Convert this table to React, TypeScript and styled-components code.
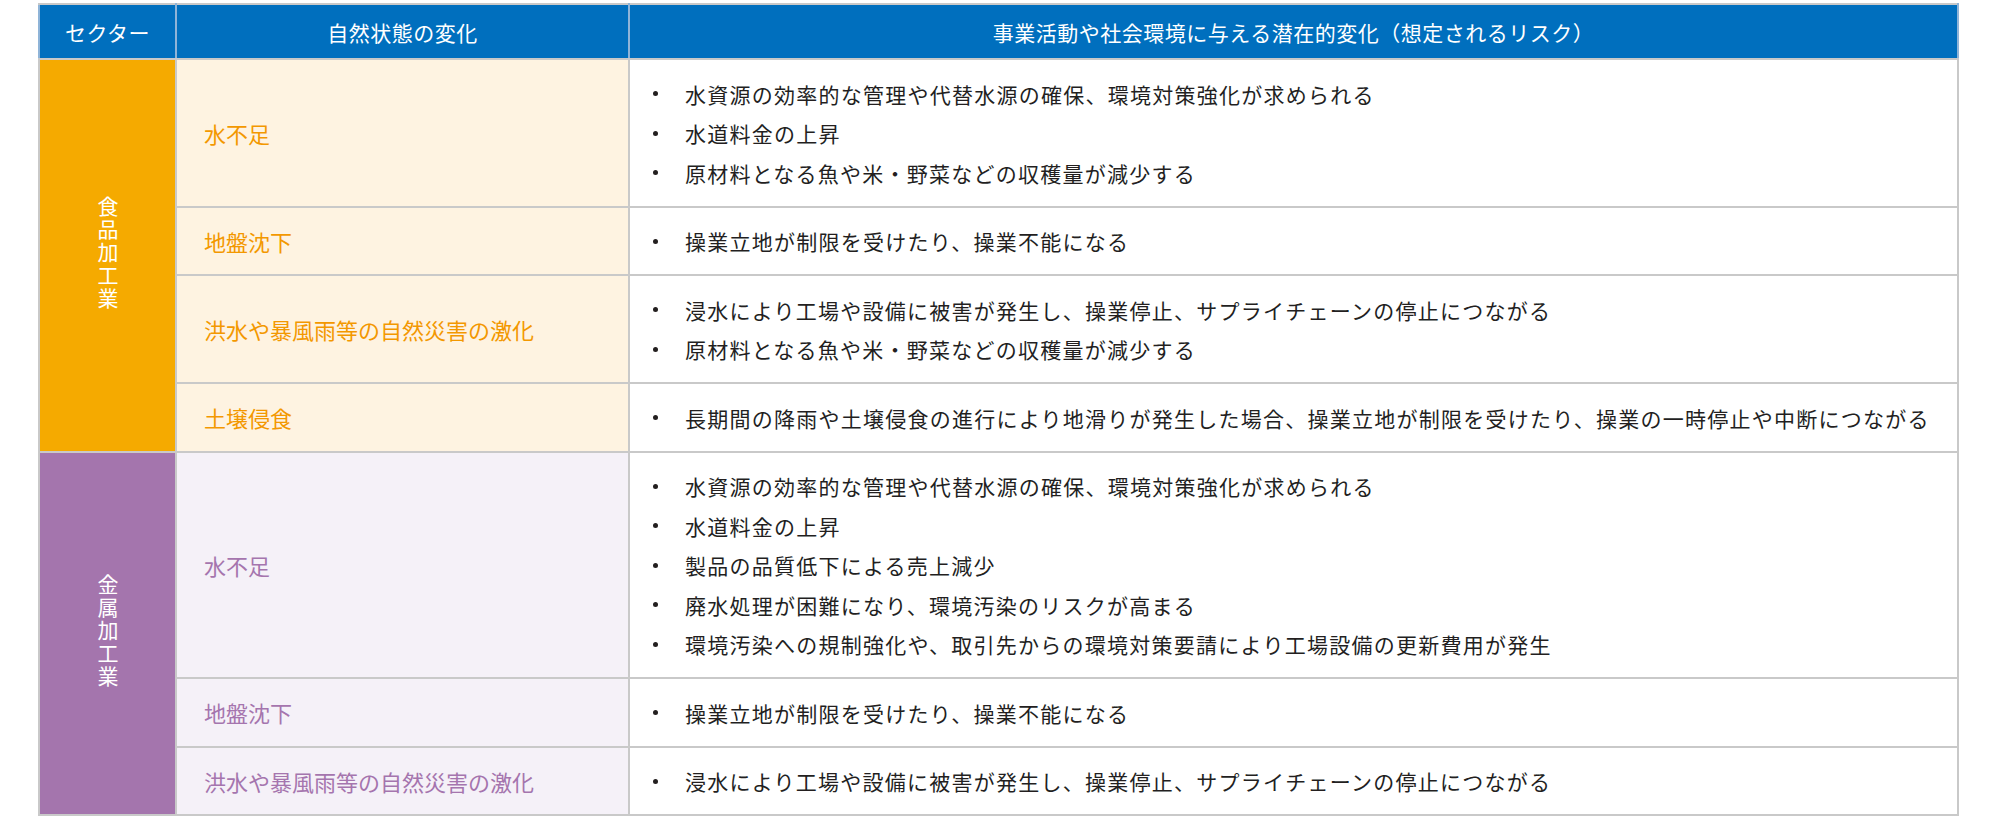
import React from "react";
import styled, { createGlobalStyle } from "styled-components";

const GlobalStyle = createGlobalStyle`
  html, body {
    margin: 0;
    padding: 0;
    background: #ffffff;
  }
  body {
    font-family: "Noto Sans CJK JP", "Noto Sans", sans-serif;
  }
`;

const Page = styled.div`
  padding: 3px 33px 0 38px;
`;

const Table = styled.table`
  width: 1921px;
  border-collapse: collapse;
  table-layout: fixed;
  border: 2px solid #c9c9c9;
`;

const HeadCell = styled.th<{ $w?: number }>`
  ${(p) => (p.$w ? `width: ${p.$w}px;` : "")}
  height: 53px;
  padding: 0;
  background: #006fbe;
  color: #ffffff;
  font-size: 21px;
  font-weight: 400;
  letter-spacing: 0.5px;
  text-align: center;
  vertical-align: middle;
  border: 2px solid #c9c9c9;
  border-left-color: #8fb4d8;
  border-right-color: #8fb4d8;
`;

const SectorCell = styled.td<{ $bg: string }>`
  padding: 0;
  background: ${(p) => p.$bg};
  border: 2px solid #c9c9c9;
  text-align: center;
  vertical-align: middle;
`;

const SectorName = styled.span`
  display: inline-block;
  writing-mode: vertical-rl;
  color: #ffffff;
  font-size: 21px;
  letter-spacing: 1.8px;
  line-height: 1;
`;

const NatureCell = styled.td<{ $bg: string; $fg: string }>`
  padding: 0 0 0 27px;
  background: ${(p) => p.$bg};
  color: ${(p) => p.$fg};
  font-size: 22px;
  border: 2px solid #c9c9c9;
  vertical-align: middle;
`;

const RiskCell = styled.td`
  padding: 14px 0 13px 23px;
  background: #ffffff;
  border: 2px solid #c9c9c9;
  vertical-align: middle;
`;

const RiskList = styled.ul`
  list-style: none;
  margin: 0;
  padding: 0;
`;

const RiskItem = styled.li`
  display: flex;
  align-items: center;
  height: 39.5px;
  color: #231f1f;
  font-size: 21px;
  letter-spacing: 1.25px;
  white-space: nowrap;
`;

const Bullet = styled.span`
  flex: 0 0 32px;
  display: flex;
  align-items: center;

  &::before {
    content: "";
    width: 5px;
    height: 5px;
    border-radius: 50%;
    background: #231f1f;
  }
`;

type Row = { nature: string; risks: string[] };
type Sector = { name: string; bg: string; soft: string; accent: string; rows: Row[] };

const sectors: Sector[] = [
  {
    name: "食品加工業",
    bg: "#f5aa00",
    soft: "#fef3e1",
    accent: "#f39800",
    rows: [
      {
        nature: "水不足",
        risks: [
          "水資源の効率的な管理や代替水源の確保、環境対策強化が求められる",
          "水道料金の上昇",
          "原材料となる魚や米・野菜などの収穫量が減少する",
        ],
      },
      { nature: "地盤沈下", risks: ["操業立地が制限を受けたり、操業不能になる"] },
      {
        nature: "洪水や暴風雨等の自然災害の激化",
        risks: [
          "浸水により工場や設備に被害が発生し、操業停止、サプライチェーンの停止につながる",
          "原材料となる魚や米・野菜などの収穫量が減少する",
        ],
      },
      {
        nature: "土壌侵食",
        risks: [
          "長期間の降雨や土壌侵食の進行により地滑りが発生した場合、操業立地が制限を受けたり、操業の一時停止や中断につながる",
        ],
      },
    ],
  },
  {
    name: "金属加工業",
    bg: "#a475ad",
    soft: "#f5f1f8",
    accent: "#a575ae",
    rows: [
      {
        nature: "水不足",
        risks: [
          "水資源の効率的な管理や代替水源の確保、環境対策強化が求められる",
          "水道料金の上昇",
          "製品の品質低下による売上減少",
          "廃水処理が困難になり、環境汚染のリスクが高まる",
          "環境汚染への規制強化や、取引先からの環境対策要請により工場設備の更新費用が発生",
        ],
      },
      { nature: "地盤沈下", risks: ["操業立地が制限を受けたり、操業不能になる"] },
      {
        nature: "洪水や暴風雨等の自然災害の激化",
        risks: ["浸水により工場や設備に被害が発生し、操業停止、サプライチェーンの停止につながる"],
      },
    ],
  },
];

export default function App() {
  return (
    <Page>
      <GlobalStyle />
      <Table>
        <thead>
          <tr>
            <HeadCell $w={135}>セクター</HeadCell>
            <HeadCell $w={451}>自然状態の変化</HeadCell>
            <HeadCell>事業活動や社会環境に与える潜在的変化（想定されるリスク）</HeadCell>
          </tr>
        </thead>
        <tbody>
          {sectors.map((s) =>
            s.rows.map((r, i) => (
              <tr key={s.name + i}>
                {i === 0 && (
                  <SectorCell $bg={s.bg} rowSpan={s.rows.length}>
                    <SectorName>{s.name}</SectorName>
                  </SectorCell>
                )}
                <NatureCell $bg={s.soft} $fg={s.accent}>
                  {r.nature}
                </NatureCell>
                <RiskCell>
                  <RiskList>
                    {r.risks.map((t) => (
                      <RiskItem key={t}>
                        <Bullet />
                        {t}
                      </RiskItem>
                    ))}
                  </RiskList>
                </RiskCell>
              </tr>
            ))
          )}
        </tbody>
      </Table>
    </Page>
  );
}
